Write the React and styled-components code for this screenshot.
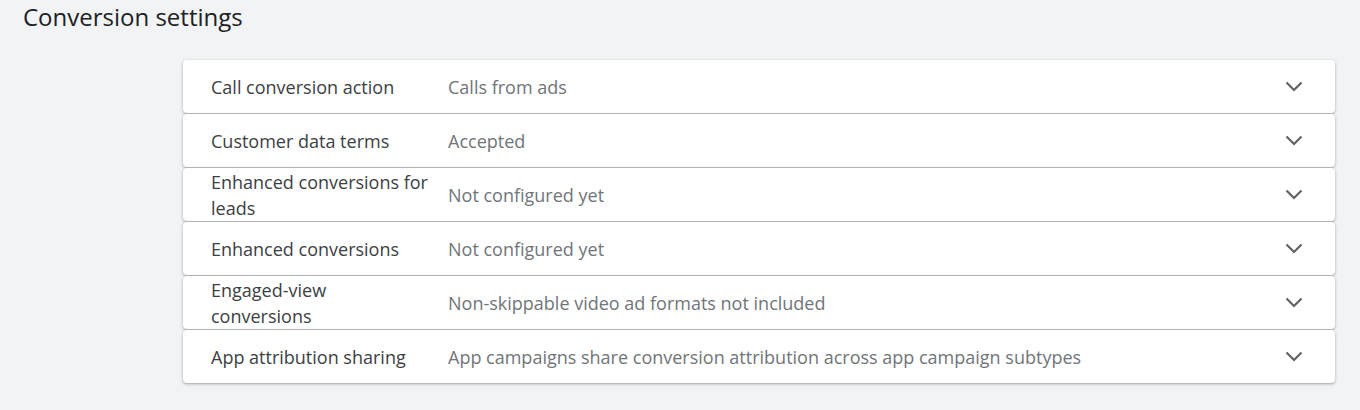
import React from 'react';
import styled, { createGlobalStyle } from 'styled-components';

const Global = createGlobalStyle`
  html, body {
    margin: 0;
    padding: 0;
    background: #f1f3f4;
    font-family: "Open Sans", Roboto, Arial, sans-serif;
  }
`;

const Page = styled.div`
  width: 1360px;
  height: 410px;
  box-sizing: border-box;
  padding: 1px 25px 0 23px;
`;

const Heading = styled.h1`
  margin: 0;
  font-size: 24px;
  font-weight: 400;
  color: #202124;
  line-height: 32px;
`;

const List = styled.div`
  margin: 27px 0 0 160px;
  display: flex;
  flex-direction: column;
  gap: 1px;
`;

const Row = styled.div`
  display: flex;
  align-items: center;
  min-height: 53px;
  padding: 0 28px;
  background: #fff;
  border-radius: 4px;
  box-shadow: 0 1px 2px rgba(60, 64, 67, 0.3), 0 1px 3px 1px rgba(60, 64, 67, 0.12);
  cursor: pointer;
`;

const Label = styled.div`
  width: 219px;
  margin-right: 18px;
  flex-shrink: 0;
  font-size: 18px;
  line-height: 26px;
  font-weight: 500;
  color: #3c4043;
`;

const Value = styled.div`
  flex: 1;
  font-size: 18px;
  color: #70757a;
`;

const Chevron = styled.svg`
  width: 18px;
  height: 11px;
  margin-right: 4px;
  flex-shrink: 0;
`;

const settings = [
  { label: 'Call conversion action', value: 'Calls from ads' },
  { label: 'Customer data terms', value: 'Accepted' },
  { label: 'Enhanced conversions for leads', value: 'Not configured yet' },
  { label: 'Enhanced conversions', value: 'Not configured yet' },
  { label: 'Engaged-view conversions', value: 'Non-skippable video ad formats not included' },
  { label: 'App attribution sharing', value: 'App campaigns share conversion attribution across app campaign subtypes' },
];

const App = () => (
  <Page>
    <Global />
    <Heading>Conversion settings</Heading>
    <List>
      {settings.map((s) => (
        <Row key={s.label}>
          <Label>{s.label}</Label>
          <Value>{s.value}</Value>
          <Chevron viewBox="0 0 18 11">
            <polyline points="1.5,1.5 9,9 16.5,1.5" fill="none" stroke="#5f6368" strokeWidth="2.2" />
          </Chevron>
        </Row>
      ))}
    </List>
  </Page>
);

export default App;
